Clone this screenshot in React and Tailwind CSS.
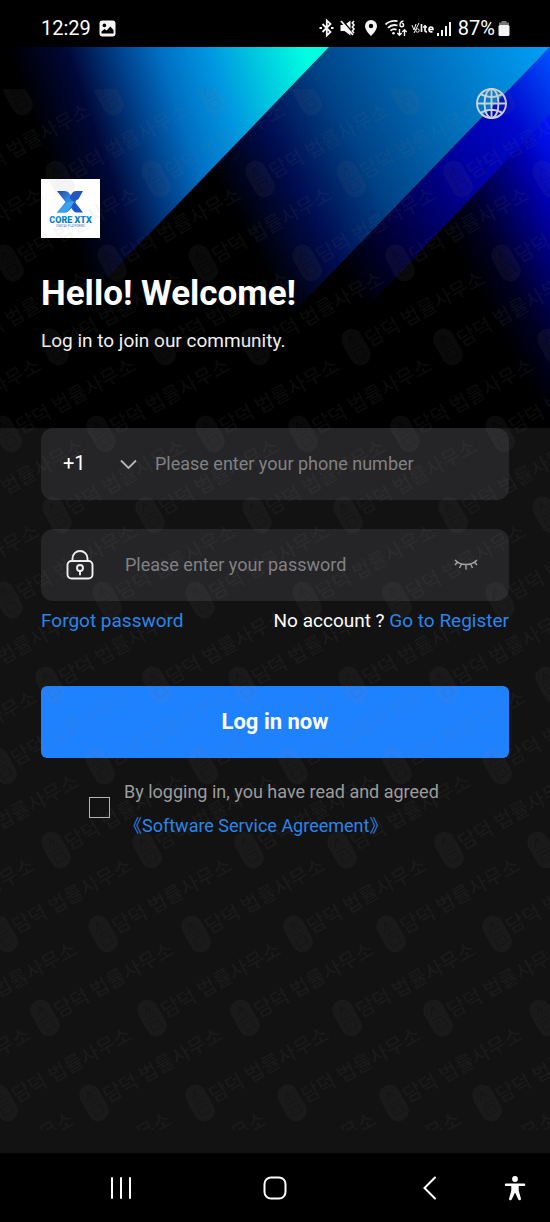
import { useState } from "react";

const watermarkRows = [
  { y: 97, xs: [18, 109, 211, 307, 405, 500], stampOnly: true },
  { y: 179, xs: [-38, 60, 156, 260, 351, 458, 547] },
  { y: 263, xs: [-86, 9, 112, 203, 307, 400, 506] },
  { y: 347, xs: [-40, 54, 161, 255, 356, 448, 552] },
  { y: 434, xs: [-88, 7, 101, 210, 303, 405, 500] },
  { y: 515, xs: [-44, 57, 150, 257, 348, 453, 547] },
  { y: 600, xs: [-90, 8, 107, 200, 307, 397, 500] },
  { y: 685, xs: [-48, 50, 157, 243, 353, 444, 550] },
  { y: 766, xs: [-92, 2, 100, 203, 293, 397, 497] },
  { y: 850, xs: [-50, 56, 147, 249, 342, 449, 542] },
  { y: 934, xs: [-94, 3, 103, 196, 298, 391, 497] },
  { y: 1018, xs: [-52, 45, 152, 245, 347, 438, 544] },
  { y: 1103, xs: [-98, 3, 94, 200, 292, 394, 487] },
  { y: 1188, xs: [-54, 43, 138, 247, 332, 428] },
];

function Watermark() {
  return (
    <div
      className="pointer-events-none absolute inset-x-0 top-[89px] bottom-[92px] overflow-hidden"
      aria-hidden="true"
    >
      <svg width="100%" height="1041" className="block">
        <g transform="translate(0 -89)" fill="#808080" opacity="0.08">
          {watermarkRows.map((row) =>
            row.xs.map((x) => (
              <g key={`${row.y}-${x}`} transform={`translate(${x} ${row.y}) rotate(-29)`}>
                <rect x="-10.500" y="-19.500" width="21" height="39" rx="10.500" />
                <path
                  d="M-5 -4 0 -13 5 -4M0 -13v10M-6 0h12M-5 4h10v8h-10z"
                  fill="none"
                  stroke="#444"
                  strokeWidth="1"
                />
                {!row.stampOnly && (
                  <text
                    x="12"
                    y="7"
                    fontSize="20"
                    fontWeight="500"
                    fontFamily="'Noto Sans CJK KR', sans-serif"
                  >
                    담덕 법률사무소
                  </text>
                )}
              </g>
            ))
          )}
        </g>
      </svg>
    </div>
  );
}

function StatusBar() {
  return (
    <div className="flex h-[47px] items-center justify-between bg-black pt-[9px] pr-10 pl-[41px] text-white">
      <div className="flex items-center gap-2">
        <span className="text-[20px] leading-6">12:29</span>
        <svg width="17" height="17" viewBox="0 0 17 17">
          <rect x="0.5" y="0.5" width="16" height="16" rx="3" fill="#f4f4f4" />
          <circle cx="5.4" cy="5.4" r="1.8" fill="#000" />
          <path d="M2.5 13.5v-2l3-2.6 2.2 1.7 3.6-4.2 3.2 3.6v3.5z" fill="#000" />
        </svg>
      </div>
      <div className="flex items-center">
        <svg width="136" height="20" viewBox="0 0 136 20" fill="none" stroke="#f4f4f4">
          {/* bluetooth */}
          <path d="M3.500 6l8 8-3.700 3.500v-15L11.500 6l-8 8" strokeWidth="1.8" />
          <path d="M0.500 10h2.500M12 10h2.500" strokeWidth="2" />
          {/* muted speaker */}
          <path d="M21.500 7h4l6-4.500v15l-6-4.500h-4z" fill="#f4f4f4" stroke="none" />
          <path d="M23.500 2.500l11.500 13.500" stroke="#000" strokeWidth="1.500" />
          <path d="M22 3l12 14" strokeWidth="1.800" />
          <path d="M35 3l-1.700 2 1.700 2-1.700 2 1.700 2-1.700 2 1.700 2" strokeWidth="1.6" />
          {/* location */}
          <path
            d="M52 2a6 6 0 0 0-6 6c0 4.500 6 10 6 10s6-5.500 6-10a6 6 0 0 0-6-6zm0 3.800a2.200 2.200 0 1 1 0 4.400 2.200 2.200 0 0 1 0-4.400z"
            fill="#f4f4f4"
            stroke="none"
          />
          {/* wifi */}
          <path d="M66.500 6.500q5-4.500 12-3.300M69 9.800q4-4 9.500-2.300M71.500 12.700q3-2.700 6-1" strokeWidth="1.8" />
          <circle cx="74.500" cy="15.200" r="1.300" fill="#f4f4f4" stroke="none" />
          <path d="M84.500 3q-3.500.5-3.500 4a1.800 1.800 0 1 0 1.800-1.800" strokeWidth="1.4" />
          <path d="M80.500 11v6M78.300 15l2.200 2.300 2.200-2.300M85.500 18v-6M83.300 14l2.200-2.300 2.200 2.300" strokeWidth="1.4" />
          {/* volte */}
          <path d="M93 7l2 5 2-6M100 5l-5 10" strokeWidth="1" />
          <circle cx="98.500" cy="12.500" r="1.700" strokeWidth="1" />
          <path
            d="M102.500 6v8M106 7v5.500q0 1.500 2 1.300M104 9h4M110 11.500h4q0-2.500-2-2.500t-2 2.500 2.500 2.300h1"
            strokeWidth="1.7"
          />
          {/* signal */}
          <path d="M119 15v3M123 12v6M127 8v10M131 4v14" strokeWidth="2" />
        </svg>
        <span className="ml-[3px] text-[20px] leading-6">87%</span>
        <svg width="12" height="17" viewBox="0 0 12 17" className="ml-[3px]">
          <path d="M3.500 1h5v1.500H11V5H1V2.500h2.500z" fill="#777" />
          <rect x="0.500" y="5" width="11" height="11" rx="1.500" fill="#f4f4f4" />
        </svg>
      </div>
    </div>
  );
}

function HeroArt() {
  return (
    <svg
      className="absolute inset-0 h-full w-full"
      viewBox="0 0 550 381"
      preserveAspectRatio="none"
      aria-hidden="true"
    >
      <defs>
        <linearGradient id="beamA" gradientUnits="userSpaceOnUse" x1="85" y1="232" x2="382" y2="131">
          <stop offset="0" stopColor="#000" />
          <stop offset="0.18" stopColor="#000838" />
          <stop offset="0.32" stopColor="#003c84" />
          <stop offset="0.46" stopColor="#0070c4" />
          <stop offset="0.6" stopColor="#0094e0" />
          <stop offset="0.78" stopColor="#00d4e0" />
          <stop offset="0.9" stopColor="#00ffe2" />
        </linearGradient>
        <linearGradient id="beamB" gradientUnits="userSpaceOnUse" x1="290" y1="272" x2="608" y2="102">
          <stop offset="0" stopColor="#000" />
          <stop offset="0.19" stopColor="#000c50" />
          <stop offset="0.39" stopColor="#004286" />
          <stop offset="0.6" stopColor="#0066b0" />
          <stop offset="1" stopColor="#00a2fa" />
        </linearGradient>
        <linearGradient id="beamC" gradientUnits="userSpaceOnUse" x1="355" y1="250" x2="603" y2="85">
          <stop offset="0" stopColor="#000" />
          <stop offset="0.27" stopColor="#00004a" />
          <stop offset="0.54" stopColor="#0000a0" />
          <stop offset="0.77" stopColor="#0008cc" />
          <stop offset="1" stopColor="#0050ff" />
        </linearGradient>
        <linearGradient id="beamD" gradientUnits="userSpaceOnUse" x1="444" y1="184" x2="568" y2="117">
          <stop offset="0" stopColor="#000" />
          <stop offset="0.26" stopColor="#000024" />
          <stop offset="0.52" stopColor="#00006e" />
          <stop offset="0.75" stopColor="#0000b4" />
          <stop offset="1" stopColor="#0014f6" />
        </linearGradient>
      </defs>
      <rect width="550" height="381" fill="#000" />
      <path d="M550 66L240 396H550z" fill="url(#beamD)" />
      <path d="M550 0L240 321V396L550 67z" fill="url(#beamC)" />
      <path d="M329 0H550L198 364L100 238z" fill="url(#beamB)" />
      <path d="M0 0H329L0 342z" fill="url(#beamA)" />
    </svg>
  );
}

function Globe() {
  return (
    <svg width="31" height="31" viewBox="0 0 31 31" fill="none" stroke="#cdd2d6" strokeWidth="1.900">
      <circle cx="15.500" cy="15.500" r="14.500" />
      <ellipse cx="15.500" cy="15.500" rx="7" ry="14.500" />
      <path d="M15.500 1v29M1 15.500h29M4.500 6.200q11 6 22 0M4.500 24.800q11-6 22 0" />
    </svg>
  );
}

function Logo() {
  return (
    <svg width="59" height="59" viewBox="0 0 59 59" role="img" aria-label="CORE XTX" className="block">
      <defs>
        <linearGradient id="logoX" x1="0" y1="0" x2="1" y2="1">
          <stop offset="0" stopColor="#1b3f9c" />
          <stop offset="0.5" stopColor="#2f8ce8" />
          <stop offset="1" stopColor="#123f9e" />
        </linearGradient>
        <linearGradient id="logoText" x1="0" y1="0" x2="0" y2="1">
          <stop offset="0" stopColor="#0d9be0" />
          <stop offset="1" stopColor="#0b62b4" />
        </linearGradient>
      </defs>
      <rect width="59" height="59" fill="#fff" />
      <path d="M16 12h8q3 0 5 3l6 7.500-5 7q-3 4-6 4h-8l8.500-10.500z" fill="url(#logoX)" />
      <path d="M42 12h-7q-3 0-4.500 3l-2 4 4.500 4 4.500-3z" fill="#2456bd" />
      <path d="M42 33.500h-6q-3 0-5-3.500l-2-3.500 4.500-4z" fill="#1a56c4" />
      <path d="M16 33.500l8-8.500q4-3.500 9.500-2.500l-4.500 7q-2 4-5 4z" fill="#3ba0f0" />
      <text
        x="29.500"
        y="44"
        textAnchor="middle"
        fontSize="9"
        fontWeight="900"
        fontFamily="Roboto, sans-serif"
        fill="url(#logoText)"
      >
        CORE XTX
      </text>
      <text
        x="29.500"
        y="48"
        textAnchor="middle"
        fontSize="3"
        fontFamily="Roboto, sans-serif"
        fill="#4a7fb0"
      >
        DIGITAL PLATFORMS
      </text>
    </svg>
  );
}

function LockIcon() {
  return (
    <svg width="28" height="30" viewBox="0 0 28 30" fill="none" stroke="#f2f2f2" strokeWidth="1.900">
      <path d="M6.500 11V8.500a7.500 7.500 0 0 1 15 0V11" />
      <rect x="1.500" y="11" width="25" height="17.500" rx="4" />
      <circle cx="14" cy="18" r="3" />
      <path d="M14 21v3.500" strokeLinecap="round" />
    </svg>
  );
}

function ClosedEye() {
  return (
    <svg width="24" height="12" viewBox="0 0 24 12" fill="none" stroke="#a6a6a8" strokeWidth="1.400">
      <path d="M1 1q4 4.500 11 4.500T23 1M3.500 3L1 6M7.500 5L5.500 9M12 5.500v5M16.500 5l2 4M20.500 3l2.500 3" />
    </svg>
  );
}

function NavBar() {
  return (
    <nav className="grid h-[69px] grid-cols-[1fr_66px_1fr] items-center bg-black">
      <button type="button" aria-label="Recent apps" className="justify-self-center">
        <svg width="24" height="24" viewBox="0 0 24 24" stroke="#fff" strokeWidth="2" strokeLinecap="round">
          <path d="M3 2v20M12 2v20M21 2v20" />
        </svg>
      </button>
      <button type="button" aria-label="Home" className="justify-self-center">
        <svg width="24" height="24" viewBox="0 0 24 24" fill="none" stroke="#fff" strokeWidth="2">
          <rect x="1.500" y="1.500" width="21" height="21" rx="6.500" />
        </svg>
      </button>
      <div className="flex items-center justify-end gap-[66px] pr-6">
        <button type="button" aria-label="Back">
          <svg width="16" height="24" viewBox="0 0 16 24" fill="none" stroke="#fff" strokeWidth="2" strokeLinecap="round">
            <path d="M13 1.500L2.500 12 13 22.500" />
          </svg>
        </button>
        <button type="button" aria-label="Accessibility">
          <svg width="22" height="26" viewBox="0 0 22 26" fill="#fff">
            <circle cx="11" cy="4" r="2.900" />
            <path d="M2 8.500h18a1.200 1.200 0 0 1 0 2.500h-5.300v4.500l2.200 8a1.400 1.400 0 0 1-2.600 1L11 17.500l-3.300 7a1.400 1.400 0 0 1-2.600-1l2.200-8V11H2a1.200 1.200 0 0 1 0-2.500z" />
          </svg>
        </button>
      </div>
    </nav>
  );
}

export default function App() {
  const [phone, setPhone] = useState("");
  const [password, setPassword] = useState("");
  const [showPassword, setShowPassword] = useState(false);
  const [agreed, setAgreed] = useState(false);

  return (
    <div className="relative flex min-h-screen flex-col bg-[#121212] font-['Roboto',sans-serif] text-white">
      <StatusBar />

      <main className="flex-1">
        <header className="relative bg-black px-[41px] pt-[41px] pb-[75px]">
          <HeroArt />
          <div className="relative">
            <div className="flex justify-end pr-0.5">
              <button type="button" aria-label="Language">
                <Globe />
              </button>
            </div>
            <div className="mt-[60px]">
              <Logo />
            </div>
            <h1 className="mt-9 text-[35px] leading-10 font-bold">Hello! Welcome!</h1>
            <p className="mt-[15px] text-[19px] leading-6 text-[#f2f2f2]">Log in to join our community.</p>
          </div>
        </header>

        <form className="px-[41px]" onSubmit={(e) => e.preventDefault()}>
          <div className="flex h-[72px] items-center rounded-xl bg-[#252528] px-[22px]">
            <div className="relative w-[74px]">
              <select
                aria-label="Country code"
                className="w-full appearance-none bg-transparent text-[20px] leading-6 outline-none"
              >
                <option>+1</option>
              </select>
              <svg
                className="pointer-events-none absolute top-2 right-0"
                width="17"
                height="11"
                viewBox="0 0 17 11"
                fill="none"
                stroke="#b8b8b8"
                strokeWidth="1.800"
              >
                <path d="M1 1.500l7.500 7.500L16 1.500" />
              </svg>
            </div>
            <input
              type="tel"
              aria-label="Phone number"
              placeholder="Please enter your phone number"
              value={phone}
              onChange={(e) => setPhone(e.target.value)}
              className="ml-[18px] min-w-0 flex-1 bg-transparent text-[18px] leading-6 outline-none placeholder:text-[#818183]"
            />
          </div>

          <div className="mt-[29px] flex h-[72px] items-center rounded-xl bg-[#252528] pr-[31px] pl-[25px]">
            <LockIcon />
            <input
              type={showPassword ? "text" : "password"}
              aria-label="Password"
              placeholder="Please enter your password"
              value={password}
              onChange={(e) => setPassword(e.target.value)}
              className="ml-[31px] min-w-0 flex-1 bg-transparent text-[18px] leading-6 outline-none placeholder:text-[#818183]"
            />
            <button type="button" aria-label="Show password" onClick={() => setShowPassword(!showPassword)}>
              <ClosedEye />
            </button>
          </div>

          <div className="mt-2 flex justify-between text-[19px] leading-6">
            <a href="#forgot" className="text-[#2b85ec]">
              Forgot password
            </a>
            <p>
              No account ?{" "}
              <a href="#register" className="text-[#2b85ec]">
                Go to Register
              </a>
            </p>
          </div>

          <button
            type="submit"
            className="mt-[53px] h-[72px] w-full rounded-md bg-[#1e82ff] text-[22px] leading-6 font-bold"
          >
            Log in now
          </button>

          <div className="mt-[17px] flex items-start pl-12">
            <input
              id="agree"
              type="checkbox"
              checked={agreed}
              onChange={(e) => setAgreed(e.target.checked)}
              className="mt-[22px] size-[21px] appearance-none border border-[#b4b4b4] checked:bg-[#1e82ff]"
            />
            <div className="ml-[14px] text-[18px] leading-[34px]">
              <label htmlFor="agree" className="block text-[#9c9c9c]">
                By logging in, you have read and agreed
              </label>
              <a href="#agreement" className="block font-['Roboto','Noto_Sans_CJK_SC',sans-serif] text-[#2b85ec]">
                《Software Service Agreement》
              </a>
            </div>
          </div>
        </form>
      </main>

      <NavBar />
      <Watermark />
    </div>
  );
}
